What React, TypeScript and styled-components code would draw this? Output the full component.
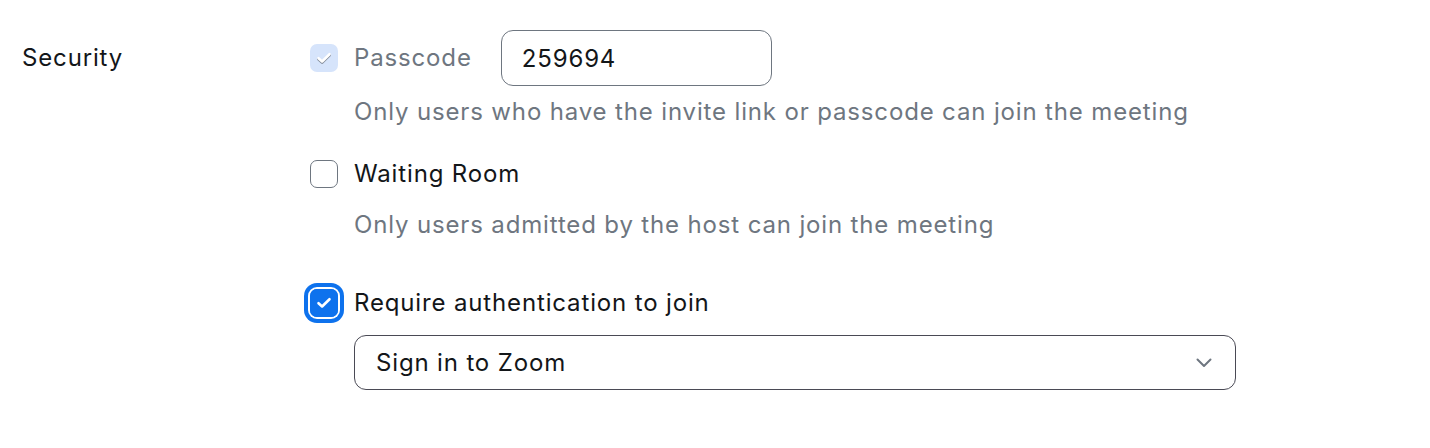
import React, { useState } from 'react';
import styled, { createGlobalStyle } from 'styled-components';

const GlobalStyle = createGlobalStyle`
  html, body {
    margin: 0;
    padding: 0;
    background: #ffffff;
  }
  body {
    font-family: Inter, "Noto Sans", "Liberation Sans", sans-serif;
    color: #232333;
  }
`;

const SettingRow = styled.div`
  display: grid;
  grid-template-columns: 288px 1fr;
  padding: 30px 0 0 22px;
  width: 1236px;
  box-sizing: border-box;
`;

const SettingLabel = styled.div`
  font-size: 24px;
  letter-spacing: 0.85px;
  line-height: 28px;
  padding-top: 14px;
  color: #131619;
`;

const Options = styled.div`
  display: flex;
  flex-direction: column;
`;

const OptionLine = styled.div<{ $top?: number }>`
  display: flex;
  align-items: center;
  gap: 16px;
  margin-top: ${(p) => p.$top ?? 0}px;
  min-height: 28px;
`;

const Box = styled.span<{ $state: 'off' | 'on' | 'disabled' }>`
  width: 28px;
  height: 28px;
  flex: none;
  box-sizing: border-box;
  border-radius: 7px;
  display: flex;
  align-items: center;
  justify-content: center;
  cursor: pointer;
  ${(p) =>
    p.$state === 'off'
      ? `border: 1px solid #6e7680; background: #fff;`
      : p.$state === 'disabled'
      ? `background: #d6e4fb;`
      : `background: #0e72ed; box-shadow: inset 0 0 0 1px #0e72ed, 0 0 0 2px #fff, 0 0 0 6px #0e72ed;`}
`;

const CheckLabel = styled.span<{ $muted?: boolean }>`
  font-size: 24px;
  letter-spacing: 0.85px;
  line-height: 28px;
  color: ${(p) => (p.$muted ? '#6e7680' : '#131619')};
`;

const Hint = styled.div<{ $top: number }>`
  margin: ${(p) => p.$top}px 0 0 44px;
  font-size: 24px;
  letter-spacing: 0.85px;
  line-height: 28px;
  color: #6e7680;
`;

const CodeInput = styled.input`
  margin-left: 13px;
  width: 271px;
  height: 56px;
  box-sizing: border-box;
  border: 1px solid #6e7680;
  border-radius: 12px;
  padding: 0 20px;
  font-family: Inter, "Noto Sans", "Liberation Sans", sans-serif;
  font-size: 24px;
  letter-spacing: 0.85px;
  color: #131619;
  outline: none;
`;

const Select = styled.div`
  margin: 18px 0 0 44px;
  width: 882px;
  height: 55px;
  box-sizing: border-box;
  border: 1px solid #4a4a55;
  border-radius: 12px;
  padding: 0 22px 0 21px;
  display: flex;
  align-items: center;
  justify-content: space-between;
  font-size: 24px;
  letter-spacing: 0.85px;
  color: #131619;
  cursor: pointer;
`;

const Tick = ({ color, shade }: { color: string; shade?: string }) => (
  <svg width="18" height="18" viewBox="0 0 18 18" fill="none">
    {shade && (
      <path d="M3.5 10.2l3.6 3.3L14.5 6.2" stroke={shade} strokeWidth="2.8" strokeLinecap="round" strokeLinejoin="round" />
    )}
    <path d="M3.5 9.2l3.6 3.3L14.5 5.2" stroke={color} strokeWidth="2.6" strokeLinecap="round" strokeLinejoin="round" />
  </svg>
);

const Chevron = () => (
  <svg width="18" height="18" viewBox="0 0 18 18" fill="none">
    <path d="M2.5 5.5L9 12l6.5-6.5" stroke="#6e7680" strokeWidth="2" strokeLinecap="round" strokeLinejoin="round" />
  </svg>
);

const App = () => {
  const [waiting, setWaiting] = useState(false);
  const [auth, setAuth] = useState(true);

  return (
    <>
      <GlobalStyle />
      <SettingRow>
        <SettingLabel>Security</SettingLabel>
        <Options>
          <OptionLine>
            <Box $state="disabled">
              <Tick color="#ffffff" shade="#7f8896" />
            </Box>
            <CheckLabel $muted>Passcode</CheckLabel>
            <CodeInput defaultValue="259694" />
          </OptionLine>
          <Hint $top={12}>Only users who have the invite link or passcode can join the meeting</Hint>
          <OptionLine $top={34}>
            <Box $state={waiting ? 'on' : 'off'} onClick={() => setWaiting(!waiting)}>
              {waiting && <Tick color="#fff" />}
            </Box>
            <CheckLabel>Waiting Room</CheckLabel>
          </OptionLine>
          <Hint $top={23}>Only users admitted by the host can join the meeting</Hint>
          <OptionLine $top={50}>
            <Box $state={auth ? 'on' : 'off'} onClick={() => setAuth(!auth)}>
              {auth && <Tick color="#fff" />}
            </Box>
            <CheckLabel>Require authentication to join</CheckLabel>
          </OptionLine>
          <Select>
            <span>Sign in to Zoom</span>
            <Chevron />
          </Select>
        </Options>
      </SettingRow>
    </>
  );
};

export default App;
